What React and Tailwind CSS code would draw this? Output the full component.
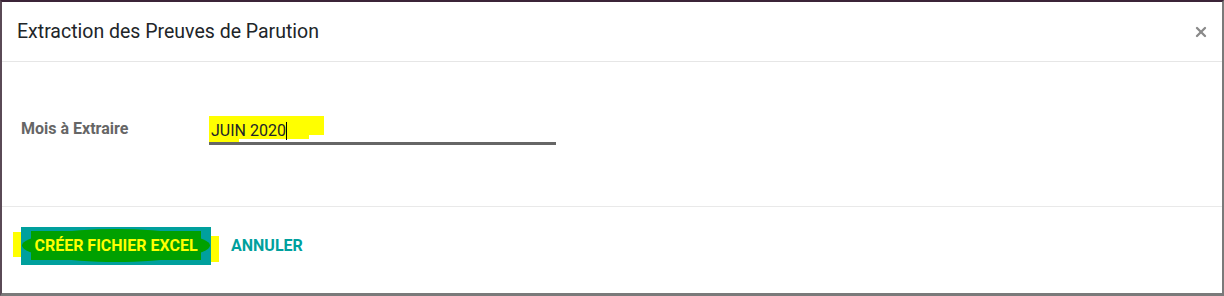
import React from 'react';
import { X } from 'lucide-react';

const font = { fontFamily: 'Roboto, "Liberation Sans", sans-serif' };

const App = () => {
  return (
    <div
      className="w-[1224px] h-[296px] flex flex-col bg-white border-t-2 border-t-[#3b2438] border-l-2 border-l-[#5a4a56] border-r-2 border-r-[#7a7a7a] border-b-[3px] border-b-[#7a7a7a] overflow-hidden"
      style={font}
    >
      {/* Header */}
      <div className="h-[60px] flex items-center justify-between pl-[15px] pr-[13px] border-b border-[#e6e6e6] shrink-0">
        <h4 className="text-[19.5px] text-[#212529] leading-none">Extraction des Preuves de Parution</h4>
        <X size={16} strokeWidth={3.5} className="text-[#8a8a8a]" />
      </div>

      {/* Body */}
      <div className="h-[145px] flex items-start pt-[54px] pl-[19px] border-b border-[#e9e9e9] shrink-0">
        <label className="w-[188px] text-[16px] font-bold text-[#666666] pt-[1px]">Mois à Extraire</label>
        <div className="w-[347px] border-b-[3px] border-[#666666] h-[29px] relative">
          <div className="absolute left-0 top-[0px] w-[115px] h-[19px] bg-[#ffff00]" />
          <div className="absolute left-0 top-[18px] w-[30px] h-[8px] bg-[#ffff00]" />
          <div className="absolute left-[30px] top-[18px] w-[70px] h-[5px] bg-[#ffff00]" />
          <span className="relative text-[16px] text-[#212529] pl-[2px] leading-none top-[3px] inline-flex items-center">
            JUIN 2020<span className="inline-block w-px h-[18px] bg-black" />
          </span>
        </div>
      </div>

      {/* Footer */}
      <div className="flex-1 flex items-start pt-[20px] pl-[19px] gap-[20px]">
        <div className="relative">
          <div className="absolute -left-[8px] top-[5px] w-[10px] h-[25px] bg-[#ffff00]" />
          <div className="absolute right-[-8px] top-[9px] w-[10px] h-[26px] bg-[#ffff00]" />
          <button className="relative w-[190px] h-[38px] bg-[#00a09d] flex items-center justify-center overflow-hidden">
            <span className="absolute left-[1px] right-[1px] top-[2px] bottom-[3px] bg-[#00a000] rounded-[50%]" />
            <span className="absolute left-[10px] right-[10px] top-[4px] bottom-[5px] bg-[#00a000]" />
            <span className="relative text-[16px] font-bold text-[#ffff00]">CRÉER FICHIER EXCEL</span>
          </button>
        </div>
        <button className="h-[38px] text-[16px] font-bold text-[#00a09d]">ANNULER</button>
      </div>
    </div>
  );
};

export default App;
